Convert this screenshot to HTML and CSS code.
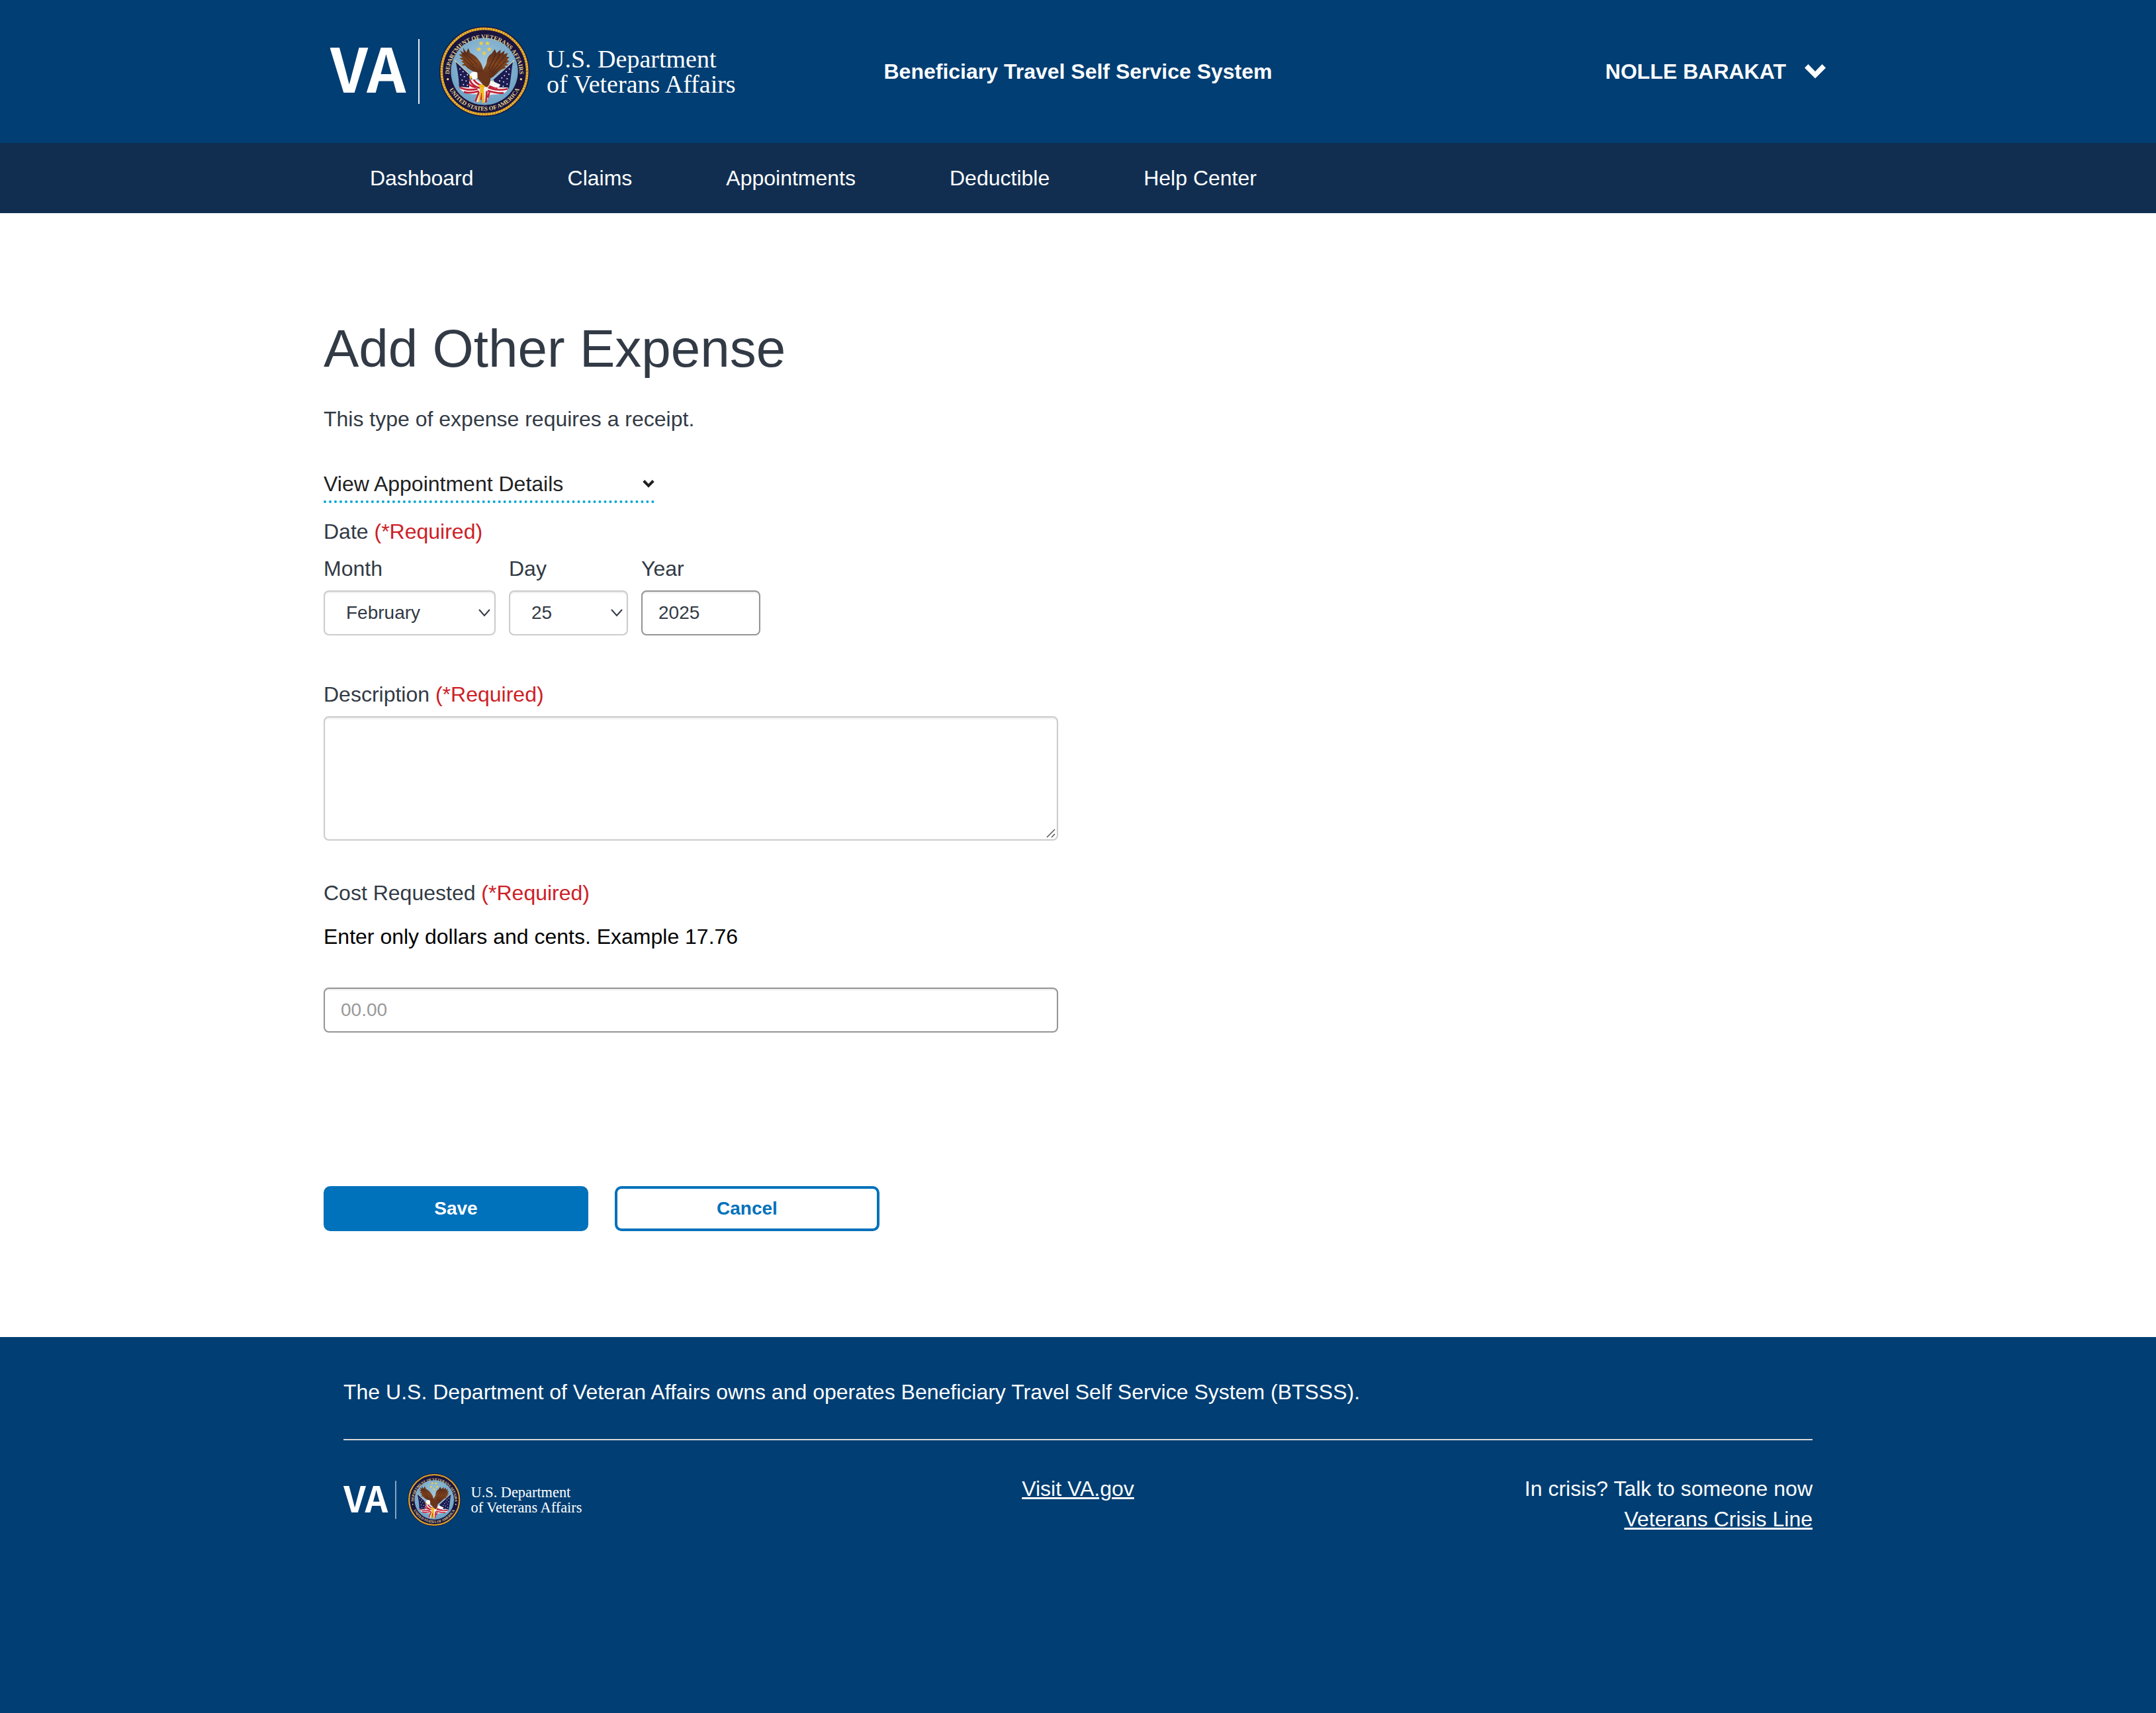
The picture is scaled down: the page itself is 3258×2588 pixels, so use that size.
FILE: index.html
```html
<!DOCTYPE html>
<html lang="en">
<head>
<meta charset="utf-8">
<meta name="viewport" content="width=device-width, initial-scale=1">
<title>Add Other Expense - Beneficiary Travel Self Service System</title>
<link rel="stylesheet" href="styles.css">
</head>
<body>
<svg class="sprite" aria-hidden="true">
  <symbol id="chevron" viewBox="0 0 32 22">
    <path d="M0 5.5L5.5 0L16 11L26.500 0L32 5.500L16 21.500Z" fill="currentColor"/>
  </symbol>
  <symbol id="caret" viewBox="0 0 18 12">
    <path d="M1 1L9 10L17 1" fill="none" stroke="currentColor" stroke-width="2"/>
  </symbol>
</svg>

<header class="banner">
  <div class="banner-inner">
    <a class="logo-link" href="#" aria-label="U.S. Department of Veterans Affairs">
      <svg class="logo" viewBox="0 0 620 136">
        <defs>
          <radialGradient id="sky" cx="50%" cy="40%" r="60%">
            <stop offset="0" stop-color="#a3c8dd"/>
            <stop offset="1" stop-color="#6da2c4"/>
          </radialGradient>
          <linearGradient id="feather" x1="0" y1="0" x2="0" y2="1">
            <stop offset="0" stop-color="#54281a"/>
            <stop offset="0.5" stop-color="#81451f"/>
            <stop offset="1" stop-color="#5a2a18"/>
          </linearGradient>
          <path id="ring-top" d="M116 243A159 159 0 0 1 434 243"/>
          <path id="ring-bottom" d="M97 233A178 178 0 0 0 453 233"/>
          <path id="star" d="M0-11L3-4L11-3L5 2L7 10L0 6L-7 10L-5 2L-11-3L-3-4Z"/>
        </defs>
        <g id="va-logo">
          <text class="logo-va" x="0" y="100">VA</text>
          <rect x="133" y="19" width="2" height="98" fill="#e8eef4"/>
          <g transform="translate(141.330 -9.670) scale(0.33333)">
            <circle cx="275" cy="233" r="204" fill="#1a1440"/>
            <circle cx="275" cy="233" r="194" fill="none" stroke="#e9b62f" stroke-width="11"/>
            <circle cx="275" cy="233" r="194" fill="none" stroke="#a8641c" stroke-width="8" stroke-dasharray="3 9"/>
            <circle cx="275" cy="233" r="152" fill="url(#sky)"/>
            <text class="ring-text"><textPath href="#ring-top" startOffset="50%">DEPARTMENT OF VETERANS AFFAIRS</textPath></text>
            <text class="ring-text"><textPath href="#ring-bottom" startOffset="50%">UNITED STATES OF AMERICA</textPath></text>
            <circle cx="109" cy="268" r="5" fill="#e6d58a"/>
            <circle cx="441" cy="268" r="5" fill="#e6d58a"/>
            <g fill="#f0ce45">
              <use href="#star" x="260" y="105"/><use href="#star" x="289" y="105"/>
              <use href="#star" x="250" y="132"/><use href="#star" x="297" y="132"/>
              <use href="#star" x="274" y="150"/>
            </g>
            <path d="M140 182L262 302M410 182L288 302" stroke="#e6d39a" stroke-width="4"/>
            <path d="M146 190L222 262L206 312L160 302C160 262 152 226 146 190Z" fill="#1c1b52"/>
            <path d="M404 190L316 270L332 306L386 310C396 272 396 232 404 190Z" fill="#1c1b52"/>
            <g fill="#e7ebf4">
              <circle cx="164" cy="222" r="3"/><circle cx="178" cy="234" r="3"/><circle cx="168" cy="248" r="3"/>
              <circle cx="184" cy="256" r="3"/><circle cx="174" cy="272" r="3"/><circle cx="192" cy="276" r="3"/>
              <circle cx="180" cy="292" r="3"/><circle cx="198" cy="296" r="3"/><circle cx="198" cy="248" r="3"/>
              <circle cx="388" cy="222" r="3"/><circle cx="374" cy="234" r="3"/><circle cx="386" cy="246" r="3"/>
              <circle cx="366" cy="252" r="3"/><circle cx="378" cy="266" r="3"/><circle cx="354" cy="262" r="3"/>
              <circle cx="362" cy="280" r="3"/><circle cx="378" cy="290" r="3"/><circle cx="344" cy="276" r="3"/>
              <circle cx="360" cy="300" r="3"/>
            </g>
            <path d="M206 268L240 270L276 298L318 284L334 304L382 306C380 322 372 330 352 334C330 338 310 336 296 340L282 378L262 352L246 372L230 370L242 336C215 338 172 334 160 302L206 306Z" fill="#f5eeee"/>
            <g fill="none" stroke="#c01f36" stroke-width="8">
              <path d="M162 304C185 318 215 318 244 312"/>
              <path d="M182 325C205 334 230 328 250 322"/>
              <path d="M208 270C216 292 236 304 254 308"/>
              <path d="M204 290C216 302 226 304 238 304"/>
              <path d="M226 270C236 284 250 294 262 296"/>
              <path d="M380 312C350 320 320 316 292 306"/>
              <path d="M362 330C335 334 310 326 290 320"/>
              <path d="M334 308L296 300"/>
              <path d="M250 326L234 370M264 330L258 362M286 322L282 374M298 326L290 352"/>
            </g>
            <path d="M296 272L320 280L347 292C346 302 338 307 326 306C312 303 300 295 290 288Z" fill="#f6f6f6"/>
            <path d="M248 240C225 236 200 222 188 207L172 205L184 196L169 189L180 184L161 173L176 170L158 155L174 156L164 138L181 148L178 126L193 146L202 127L210 148C228 158 242 168 252 185C264 200 272 225 270 248Z" fill="url(#feather)"/>
            <path d="M262 240C272 218 285 204 286 190C288 168 298 158 308 152L322 132L330 150L348 134L348 152L367 138L363 155L382 149L374 166L389 168L377 180L388 187L373 196L384 204L366 208L372 217L352 224C335 235 322 256 300 266Z" fill="url(#feather)"/>
            <path d="M176 150L226 206M186 148L240 200M182 178L232 222M326 154L292 224M346 156L298 236M364 166L306 240M370 186L312 246" stroke="#3f1c12" stroke-width="3" fill="none"/>
            <path d="M238 240C255 230 290 236 300 256C306 274 300 292 288 304L270 300C268 286 252 274 242 262Z" fill="#6b351c"/>
            <path d="M208 254C208 238 226 230 243 238L244 262C236 266 230 270 222 268Z" fill="#fff"/>
            <path d="M207 252L220 256L213 270L207 262Z" fill="#f2c230"/>
            <path d="M246 296C254 290 272 290 278 300L272 312L276 374L266 378L262 322L254 376L248 366L256 308Z" fill="#eebb22"/>
          </g>
          <text class="logo-name" x="327" y="62">U.S. Department</text>
          <text class="logo-name" x="327" y="100">of Veterans Affairs</text>
        </g>
      </svg>
    </a>
    <strong class="system-name">Beneficiary Travel Self Service System</strong>
    <button class="account" type="button">NOLLE BARAKAT
      <svg class="account-chevron" aria-hidden="true"><use href="#chevron"/></svg>
    </button>
  </div>
</header>

<nav class="menu">
  <ul class="menu-list">
    <li><a href="#">Dashboard</a></li>
    <li><a href="#">Claims</a></li>
    <li><a href="#">Appointments</a></li>
    <li><a href="#">Deductible</a></li>
    <li><a href="#">Help Center</a></li>
  </ul>
</nav>

<main class="content">
  <h1>Add Other Expense</h1>
  <p class="intro">This type of expense requires a receipt.</p>
  <button class="details-toggle" type="button" aria-expanded="false">View Appointment Details
    <svg class="details-chevron" aria-hidden="true"><use href="#chevron"/></svg>
  </button>
  <form>
    <fieldset class="date">
      <legend>Date <span class="required">(*Required)</span></legend>
      <div class="date-parts">
        <div class="field month">
          <label for="month">Month</label>
          <div class="select">
            <select id="month"><option>January</option><option selected>February</option><option>March</option></select>
            <svg class="caret" aria-hidden="true"><use href="#caret"/></svg>
          </div>
        </div>
        <div class="field day">
          <label for="day">Day</label>
          <div class="select">
            <select id="day"><option>24</option><option selected>25</option><option>26</option></select>
            <svg class="caret" aria-hidden="true"><use href="#caret"/></svg>
          </div>
        </div>
        <div class="field year">
          <label for="year">Year</label>
          <input id="year" type="text" value="2025">
        </div>
      </div>
    </fieldset>

    <div class="field description">
      <label for="description">Description <span class="required">(*Required)</span></label>
      <div class="area">
        <textarea id="description"></textarea>
        <svg class="grip" viewBox="0 0 14 14" aria-hidden="true"><path d="M1 13L13 1M8 13L13 8" stroke="#555" stroke-width="1.500"/></svg>
      </div>
    </div>

    <div class="cost">
      <label for="cost">Cost Requested <span class="required">(*Required)</span></label>
      <p class="hint" id="cost-hint">Enter only dollars and cents. Example 17.76</p>
      <input id="cost" type="text" placeholder="00.00" aria-describedby="cost-hint">
    </div>

    <div class="actions">
      <button class="btn btn-primary" type="submit">Save</button>
      <button class="btn btn-outline" type="button">Cancel</button>
    </div>
  </form>
</main>

<footer class="footer">
  <div class="footer-inner">
    <p class="ownership">The U.S. Department of Veteran Affairs owns and operates Beneficiary Travel Self Service System (BTSSS).</p>
    <div class="footer-row">
      <a class="logo-link" href="#" aria-label="U.S. Department of Veterans Affairs">
        <svg class="logo-small" viewBox="0 0 620 136"><use href="#va-logo"/></svg>
      </a>
      <a href="#">Visit VA.gov</a>
      <p class="crisis">In crisis? Talk to someone now<br><a href="#">Veterans Crisis Line</a></p>
    </div>
  </div>
</footer>
</body>
</html>
```
FILE: styles.css
```css
* {
  box-sizing: border-box;
}

body {
  margin: 0;
  min-height: 100vh;
  display: flex;
  flex-direction: column;
  background: #fff;
  color: #323a45;
  font: 32px/46px "Liberation Sans", Arial, sans-serif;
}

h1,
p,
ul,
fieldset,
legend {
  margin: 0;
  padding: 0;
  border: 0;
}

button,
input,
select,
textarea {
  font: inherit;
  color: inherit;
}

.sprite {
  position: absolute;
  width: 0;
  height: 0;
}

/* Header */
.banner {
  padding: 40px 0;
  background: #003e73;
  color: #fff;
}

.banner-inner,
.menu-list,
.content,
.footer-inner {
  width: 100%;
  max-width: 2280px;
  margin: 0 auto;
}

.banner-inner {
  display: grid;
  grid-template-columns: 1fr auto 1fr;
  align-items: center;
  padding: 0 10px;
}

.logo-link {
  display: block;
}

.logo,
.logo-small {
  display: block;
  width: 620px;
  height: 136px;
  fill: #fff;
}

.logo-small {
  width: 365px;
  height: 80px;
}

.logo-va {
  font: bold 92px "Noto Sans CJK JP", sans-serif;
}

.logo-name {
  font: 38px "Liberation Serif", serif;
}

.ring-text {
  font: bold 27px "Liberation Serif", serif;
  fill: #e6d58a;
  text-anchor: middle;
}

.account {
  justify-self: end;
  display: flex;
  align-items: center;
  gap: 28px;
  padding: 0;
  border: 0;
  background: none;
  font-weight: bold;
}

.account-chevron {
  width: 32px;
  height: 22px;
}

/* Main menu */
.menu {
  background: #112e51;
}

.menu-list {
  display: flex;
  gap: 142px;
  padding: 30px 70px;
  list-style: none;
}

.menu a {
  color: #fff;
  text-decoration: none;
}

/* Expense form */
.content {
  padding: 160px 0;
}

h1 {
  margin-bottom: 38px;
  font-size: 80px;
  font-weight: normal;
  line-height: 90px;
}

.intro {
  margin-bottom: 52px;
}

.details-toggle {
  display: flex;
  align-items: center;
  justify-content: space-between;
  width: 500px;
  margin-bottom: 20px;
  padding: 0 0 2px;
  border: 0;
  border-bottom: 4px dotted #00a6d2;
  background: none;
  color: #212121;
}

.details-chevron {
  width: 18px;
  height: 12px;
}

.required {
  color: #cd2026;
}

.date-parts {
  display: flex;
  gap: 20px;
  margin-top: 10px;
}

.field {
  display: flex;
  flex-direction: column;
  gap: 10px;
}

.month {
  width: 260px;
}

.day,
.year {
  width: 180px;
}

.select,
.area {
  position: relative;
  display: grid;
}

input,
select,
textarea {
  width: 100%;
  height: 68px;
  padding: 0 24px;
  border: 2px solid #949494;
  border-radius: 8px;
  background: #fff;
  box-shadow: inset 0 2px 2px rgba(0, 0, 0, 0.08);
  font-size: 28px;
}

select,
textarea {
  border-color: #ccc;
}

select {
  padding: 0 32px;
  appearance: none;
}

input::placeholder {
  color: #999;
  opacity: 1;
}

.caret {
  position: absolute;
  top: 28px;
  right: 8px;
  width: 18px;
  height: 12px;
  pointer-events: none;
}

.description,
.cost {
  max-width: 1110px;
}

.description {
  margin-top: 66px;
}

textarea {
  height: 188px;
  padding: 12px 24px;
  resize: vertical;
}

textarea::-webkit-resizer {
  background: transparent;
}

.grip {
  position: absolute;
  right: 4px;
  bottom: 4px;
  width: 14px;
  height: 14px;
  pointer-events: none;
}

.cost {
  margin-top: 56px;
}

.cost label {
  display: block;
}

.hint {
  margin: 20px 0 54px;
  color: #000;
}

.cost input {
  display: block;
}

.actions {
  display: flex;
  gap: 40px;
  margin-top: 232px;
}

.btn {
  width: 400px;
  height: 68px;
  border: 4px solid #0071bb;
  border-radius: 10px;
  font-size: 28px;
  font-weight: bold;
}

.btn-primary {
  background: #0071bb;
  color: #fff;
}

.btn-outline {
  background: #fff;
  color: #0071bb;
}

/* Footer */
.footer {
  flex: 1;
  padding: 60px 0;
  background: #003e73;
  color: #fff;
}

.footer a {
  color: #fff;
  text-decoration-thickness: 3px;
}

.footer-inner {
  padding: 0 30px;
}

.ownership {
  padding-bottom: 48px;
  border-bottom: 2px solid #d6d7d9;
}

.footer-row {
  display: grid;
  grid-template-columns: 1fr auto 1fr;
  align-items: start;
  padding-top: 50px;
}

.crisis {
  text-align: right;
}
```
